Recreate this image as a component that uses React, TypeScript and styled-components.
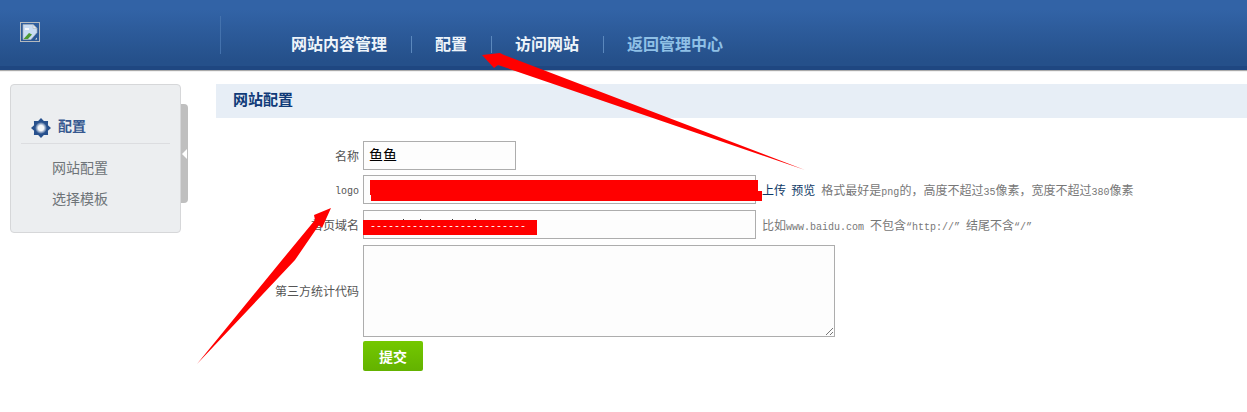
import React from "react";
import styled, { createGlobalStyle } from "styled-components";

const GlobalStyle = createGlobalStyle`
  html, body {
    margin: 0;
    padding: 0;
    background: #fff;
    overflow: hidden;
  }
  body {
    font-family: "Liberation Sans", "Noto Sans CJK SC", sans-serif;
  }
`;

const Page = styled.div`
  position: relative;
  width: 1247px;
  height: 412px;
  overflow: hidden;
`;

const Header = styled.header`
  display: flex;
  box-sizing: border-box;
  height: 70px;
  background: linear-gradient(#3263a6 0%, #3263a6 15%, #25508a 92%);
  border-bottom: 4px solid #1f4781;
  box-shadow: 0 1px 1px #aaa;
`;

const LogoBox = styled.div`
  box-sizing: border-box;
  width: 220px;
  padding: 22px 0 0 20px;
`;

const BrokenImage = styled.svg`
  display: block;
  width: 20px;
  height: 20px;
`;

const Nav = styled.nav`
  display: flex;
  align-items: center;
  box-sizing: border-box;
  height: 38px;
  margin-top: 16px;
  padding: 18px 0 0 46px;
  border-left: 1px solid #4472ad;
`;

const NavItem = styled.a<{ $muted?: boolean }>`
  display: block;
  padding: 0 24px 0 23px;
  border-left: 1px solid #5b88bd;
  font-size: 16px;
  line-height: 17px;
  font-weight: 700;
  color: ${({ $muted }) => ($muted ? "#8fc0e6" : "#eef4fa")};

  &:first-child {
    border-left: none;
    padding-left: 24px;
  }
`;

const Body = styled.div`
  display: flex;
  align-items: flex-start;
  padding: 14px 0 0 10px;
`;

const SideWrap = styled.div`
  display: flex;
  align-items: flex-start;
  width: 206px;
  flex: none;
`;

const Sidebar = styled.aside`
  box-sizing: border-box;
  width: 171px;
  height: 149px;
  padding: 33px 10px 0;
  background: #eceef0;
  border: 1px solid #d6d7d9;
  border-radius: 4px;
`;

const SideHead = styled.div`
  display: flex;
  align-items: flex-start;
  gap: 7px;
  height: 26px;
  box-sizing: border-box;
  padding-left: 10px;
  border-bottom: 1px solid #dcdde0;
  font-size: 14px;
  line-height: 16px;
  font-weight: 700;
  color: #36588f;
`;

const GearIcon = styled.svg`
  width: 20px;
  height: 20px;
  flex: none;
`;

const SideLink = styled.a`
  display: block;
  padding-left: 31px;
  font-size: 14px;
  line-height: 31px;
  color: #6e7478;

  &:first-of-type {
    margin-top: 9px;
  }
`;

const Toggle = styled.div`
  display: flex;
  align-items: center;
  justify-content: flex-start;
  box-sizing: border-box;
  width: 7px;
  height: 99px;
  margin-top: 20px;
  padding-left: 1px;
  background: #bfbfbf;
  border-radius: 0 4px 4px 0;
`;

const ToggleArrow = styled.span`
  width: 0;
  height: 0;
  border-top: 5px solid transparent;
  border-bottom: 5px solid transparent;
  border-right: 5px solid #fff;
`;

const Main = styled.main`
  flex: 1;
`;

const TitleBar = styled.h2`
  box-sizing: border-box;
  height: 34px;
  margin: 0;
  padding-left: 17px;
  background: #e7eef6;
  font-size: 15px;
  line-height: 32px;
  font-weight: 700;
  color: #0f3a78;
`;

const Form = styled.form`
  display: flex;
  flex-direction: column;
  padding-top: 23px;
`;

const Row = styled.div<{ $gap: number }>`
  display: flex;
  align-items: center;
  margin-bottom: ${({ $gap }) => $gap}px;
`;

const Label = styled.label<{ $mono?: boolean }>`
  box-sizing: border-box;
  width: 143px;
  flex: none;
  text-align: right;
  padding: ${({ $mono }) => ($mono ? "3px 0 0" : "0 0 1px")};
  font-size: ${({ $mono }) => ($mono ? "10px" : "12px")};
  font-family: ${({ $mono }) =>
    $mono ? '"Liberation Mono", monospace' : '"Liberation Sans", "Noto Sans CJK SC", sans-serif'};
  color: #555;
`;

const FieldWrap = styled.div<{ $width: number }>`
  position: relative;
  box-sizing: border-box;
  width: ${({ $width }) => $width}px;
  height: 29px;
  margin-left: 4px;
  flex: none;
  background: #fdfdfd;
  border: 1px solid #adadad;
  font-size: 14px;
  line-height: 27px;
  padding-left: 5px;
  color: #000;
`;

const TextArea = styled.div`
  box-sizing: border-box;
  position: relative;
  width: 472px;
  height: 92px;
  margin-left: 4px;
  background: #fdfdfd;
  border: 1px solid #adadad;
`;

const Resizer = styled.svg`
  position: absolute;
  right: 0;
  bottom: 0;
  width: 10px;
  height: 10px;
`;

const Redaction = styled.div<{ $left: number; $top: number; $width: number; $height: number }>`
  position: absolute;
  left: ${({ $left }) => $left}px;
  top: ${({ $top }) => $top}px;
  width: ${({ $width }) => $width}px;
  height: ${({ $height }) => $height}px;
  background: #ff0000;
`;

const DashText = styled.span`
  position: absolute;
  left: 7px;
  top: 0;
  color: #fff;
  font-family: "Liberation Mono", monospace;
  font-size: 10px;
  line-height: 14px;
  white-space: nowrap;
`;

// bits of the hidden address that stick out above the red bar
const Tick = styled.i<{ $left: number }>`
  position: absolute;
  left: ${({ $left }) => $left}px;
  top: 8px;
  width: 1px;
  height: 1px;
  background: #333;
`;

const Actions = styled.span`
  margin-left: 6px;
  font-size: 12px;
  color: #0f3a66;
  word-spacing: 2px;
  white-space: nowrap;
`;

const Hint = styled.span`
  margin-left: 6px;
  font-size: 12px;
  color: #777;
  white-space: nowrap;
`;

const Latin = styled.span`
  font-family: "Liberation Mono", monospace;
  font-size: 10px;
`;

const SubmitRow = styled.div`
  padding-left: 147px;
`;

const Submit = styled.button`
  display: block;
  width: 60px;
  height: 30px;
  padding: 0;
  border: none;
  border-radius: 2px;
  background: linear-gradient(#74c800, #63b200);
  color: #fff;
  font-family: "Liberation Sans", "Noto Sans CJK SC", sans-serif;
  font-size: 14px;
  font-weight: 700;
`;

const Annotations = styled.svg`
  position: absolute;
  left: 0;
  top: 0;
  width: 1247px;
  height: 412px;
  pointer-events: none;
`;

const App: React.FC = () => {
  return (
    <Page>
      <GlobalStyle />
      <Header>
        <LogoBox>
          <BrokenImage viewBox="0 0 20 20">
            <rect x="0.5" y="0.5" width="19" height="19" fill="none" stroke="#b4b9be" />
            <path d="M3 2.5h10l4 4v4L11 17.5H3z" fill="#c9dcf3" stroke="#a8b0b8" strokeWidth="0.7" />
            <path d="M13 2.5v4h4z" fill="#e6e9ec" stroke="#a8b0b8" strokeWidth="0.5" />
            <path d="M5 6h4v2H5z" fill="#f4f7fb" />
            <path d="M3.5 17L9 11l3 1.5-4 4.5z" fill="#4e9a32" />
            <path d="M15 17.5l2-2v2z" fill="#d9dde1" />
          </BrokenImage>
        </LogoBox>
        <Nav>
          <NavItem>网站内容管理</NavItem>
          <NavItem>配置</NavItem>
          <NavItem>访问网站</NavItem>
          <NavItem $muted>返回管理中心</NavItem>
        </Nav>
      </Header>
      <Body>
        <SideWrap>
          <Sidebar>
            <SideHead>
              <GearIcon viewBox="0 0 20 20">
                <defs>
                  <radialGradient id="gearHole">
                    <stop offset="45%" stopColor="#f4f6f9" />
                    <stop offset="100%" stopColor="#27508d" />
                  </radialGradient>
                </defs>
                <polygon
                  points="20,10 16.93,12.87 17.07,17.07 12.87,16.93 10,20 7.13,16.93 2.93,17.07 3.07,12.87 0,10 3.07,7.13 2.93,2.93 7.13,3.07 10,0 12.87,3.07 17.07,2.93 16.93,7.13"
                  fill="#27508d"
                />
                <circle cx="10" cy="10" r="6" fill="url(#gearHole)" />
              </GearIcon>
              配置
            </SideHead>
            <SideLink>网站配置</SideLink>
            <SideLink>选择模板</SideLink>
          </Sidebar>
          <Toggle>
            <ToggleArrow />
          </Toggle>
        </SideWrap>
        <Main>
          <TitleBar>网站配置</TitleBar>
          <Form>
            <Row $gap={5}>
              <Label>名称</Label>
              <FieldWrap $width={153}>鱼鱼</FieldWrap>
            </Row>
            <Row $gap={6}>
              <Label $mono>logo</Label>
              <FieldWrap $width={393}>
                <Redaction $left={6} $top={4} $width={388} $height={15} />
                <Redaction $left={7} $top={15} $width={391} $height={10} />
              </FieldWrap>
              <Actions>上传 预览</Actions>
              <Hint>
                格式最好是<Latin>png</Latin>的，高度不超过<Latin>35</Latin>像素，宽度不超过
                <Latin>380</Latin>像素
              </Hint>
            </Row>
            <Row $gap={6}>
              <Label>首页域名</Label>
              <FieldWrap $width={393}>
                <Tick $left={39} />
                <Tick $left={56} />
                <Tick $left={88} />
                <Tick $left={111} />
                <Redaction $left={-1} $top={9} $width={174} $height={15}>
                  <DashText>--------------------------</DashText>
                </Redaction>
              </FieldWrap>
              <Hint>
                比如<Latin>www.baidu.com </Latin>不包含<Latin>“http://” </Latin>结尾不含
                <Latin>“/”</Latin>
              </Hint>
            </Row>
            <Row $gap={4}>
              <Label>第三方统计代码</Label>
              <TextArea>
                <Resizer viewBox="0 0 10 10">
                  <path d="M2 9L9 2M6 9L9 6" stroke="#777" strokeWidth="1" />
                </Resizer>
              </TextArea>
            </Row>
            <SubmitRow>
              <Submit type="button">提交</Submit>
            </SubmitRow>
          </Form>
        </Main>
      </Body>
      <Annotations viewBox="0 0 1247 412">
        <path d="M805 170L504 55L500 53L482 55L494 68L498 65Z" fill="#ff0000" />
        <path d="M197 364L282 260L315 220L314 215L331 208L322 228L319 225L295 260Z" fill="#ff0000" />
      </Annotations>
    </Page>
  );
};

export default App;
